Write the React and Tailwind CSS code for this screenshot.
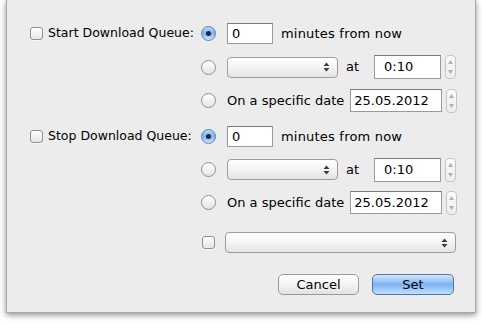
import React from "react";

const font = { fontFamily: '"DejaVu Sans", "Liberation Sans", sans-serif' };

const Checkbox = () => (
  <div className="w-[13px] h-[13px] rounded-[3px] border border-[#8f8f8f] bg-gradient-to-b from-white to-[#e6e6e6] shadow-[0_1px_0_rgba(255,255,255,0.6)] shrink-0" />
);

const Radio = ({ checked }) =>
  checked ? (
    <div className="w-[15px] h-[15px] rounded-full border border-[#5a7fb5] bg-gradient-to-b from-[#b9d6f5] via-[#7fb1ea] to-[#cfe6ff] flex items-center justify-center shrink-0">
      <div className="w-[5px] h-[5px] rounded-full bg-[#1b2a40]" />
    </div>
  ) : (
    <div className="w-[15px] h-[15px] rounded-full border border-[#8f8f8f] bg-gradient-to-b from-white to-[#e4e4e4] shrink-0" />
  );

const TextField = ({ value, w, h = "h-[22px]", pad = "pl-[4px]" }) => (
  <div className={`${w} ${h} ${pad} bg-white border border-[#9a9a9a] border-t-[#7a7a7a] flex items-center text-[13px] text-black shrink-0`}>
    {value}
  </div>
);

const UpDown = ({ color = "#3c3c3c" }) => (
  <svg width="7" height="10" viewBox="0 0 7 10">
    <path d="M3.5 0.5 L6.5 4 L0.5 4 Z" fill={color} />
    <path d="M3.5 9.5 L6.5 6 L0.5 6 Z" fill={color} />
  </svg>
);

const Popup = ({ w }) => (
  <div className={`${w} h-[21px] rounded-[4px] border border-[#9c9c9c] bg-gradient-to-b from-white via-[#f4f4f4] to-[#e3e3e3] flex items-center justify-end pr-[7px] shrink-0`}>
    <UpDown />
  </div>
);

const Stepper = () => (
  <div className="w-[11px] h-[24px] rounded-[4px] border border-[#c6c6c6] bg-gradient-to-b from-[#fbfbfb] to-[#ededed] flex flex-col items-center justify-center gap-[6px] shrink-0">
    <svg width="5" height="4" viewBox="0 0 5 4"><path d="M2.5 0 L5 4 L0 4 Z" fill="#b0b0b0" /></svg>
    <svg width="5" height="4" viewBox="0 0 5 4"><path d="M2.5 4 L5 0 L0 0 Z" fill="#b0b0b0" /></svg>
  </div>
);

const Row = ({ label, children, radio, className = "h-[33px]" }) => (
  <div className={`flex items-center ${className}`}>
    <div className="w-[194px] pl-[23px] flex items-center gap-[5px] shrink-0">
      {label && (
        <>
          <Checkbox />
          <span className="text-[12.5px] text-black whitespace-nowrap">{label}</span>
        </>
      )}
    </div>
    {radio !== undefined && <Radio checked={radio} />}
    <div className="ml-[11px] flex items-center">{children}</div>
  </div>
);

const Group = ({ label, first }) => (
  <>
    <Row label={label} radio={true} className={first ? "h-[33px]" : "h-[36px] pt-[3px]"}>
      <TextField value="0" w="w-[46px]" h="h-[21px]" />
      <span className="ml-[8px] text-[13px] tracking-[0.2px]">minutes from now</span>
    </Row>
    <Row radio={false} className={first ? "h-[34px]" : "h-[33px]"}>
      <Popup w="w-[111px]" />
      <span className="ml-[8px] text-[13px]">at</span>
      <div className="ml-[15px]">
        <TextField value="0:10" w="w-[67px]" h="h-[24px]" pad="pl-[9px]" />
      </div>
      <div className="ml-[4px]"><Stepper /></div>
    </Row>
    <Row radio={false}>
      <span className="text-[13px] whitespace-nowrap">On a specific date</span>
      <div className="ml-[6px]">
        <TextField value="25.05.2012" w="w-[92px]" h="h-[23px]" pad="pl-[3px]" />
      </div>
      <div className="ml-[4px]"><Stepper /></div>
    </Row>
  </>
);

export default function App() {
  return (
    <div className="w-[482px] h-[324px] bg-white overflow-hidden" style={font}>
      <div className="ml-[6px] w-[470px] h-[313px] bg-[#ececec] border-x border-b border-[#a8a8a8] shadow-[0_2px_6px_rgba(0,0,0,0.45)] pt-[17px] text-black">
        <Group label="Start Download Queue:" first />
        <Group label="Stop Download Queue:" />
        <div className="h-[7px]" />
        <div className="h-[33px] flex items-center pl-[195px]">
          <Checkbox />
          <div className="ml-[10px]"><Popup w="w-[231px]" /></div>
        </div>
        <div className="mt-[15px] flex justify-end pr-[21px] gap-[13px]">
          <button className="w-[81px] h-[21px] rounded-[5px] border border-[#9a9a9a] bg-gradient-to-b from-white via-[#f3f3f3] to-[#e2e2e2] text-[13px] leading-none">Cancel</button>
          <button className="w-[82px] h-[21px] rounded-[5px] border border-[#5475a8] bg-gradient-to-b from-[#d5e7fb] via-[#7db4f0] to-[#bfe0ff] text-[13px] leading-none">Set</button>
        </div>
      </div>
    </div>
  );
}
